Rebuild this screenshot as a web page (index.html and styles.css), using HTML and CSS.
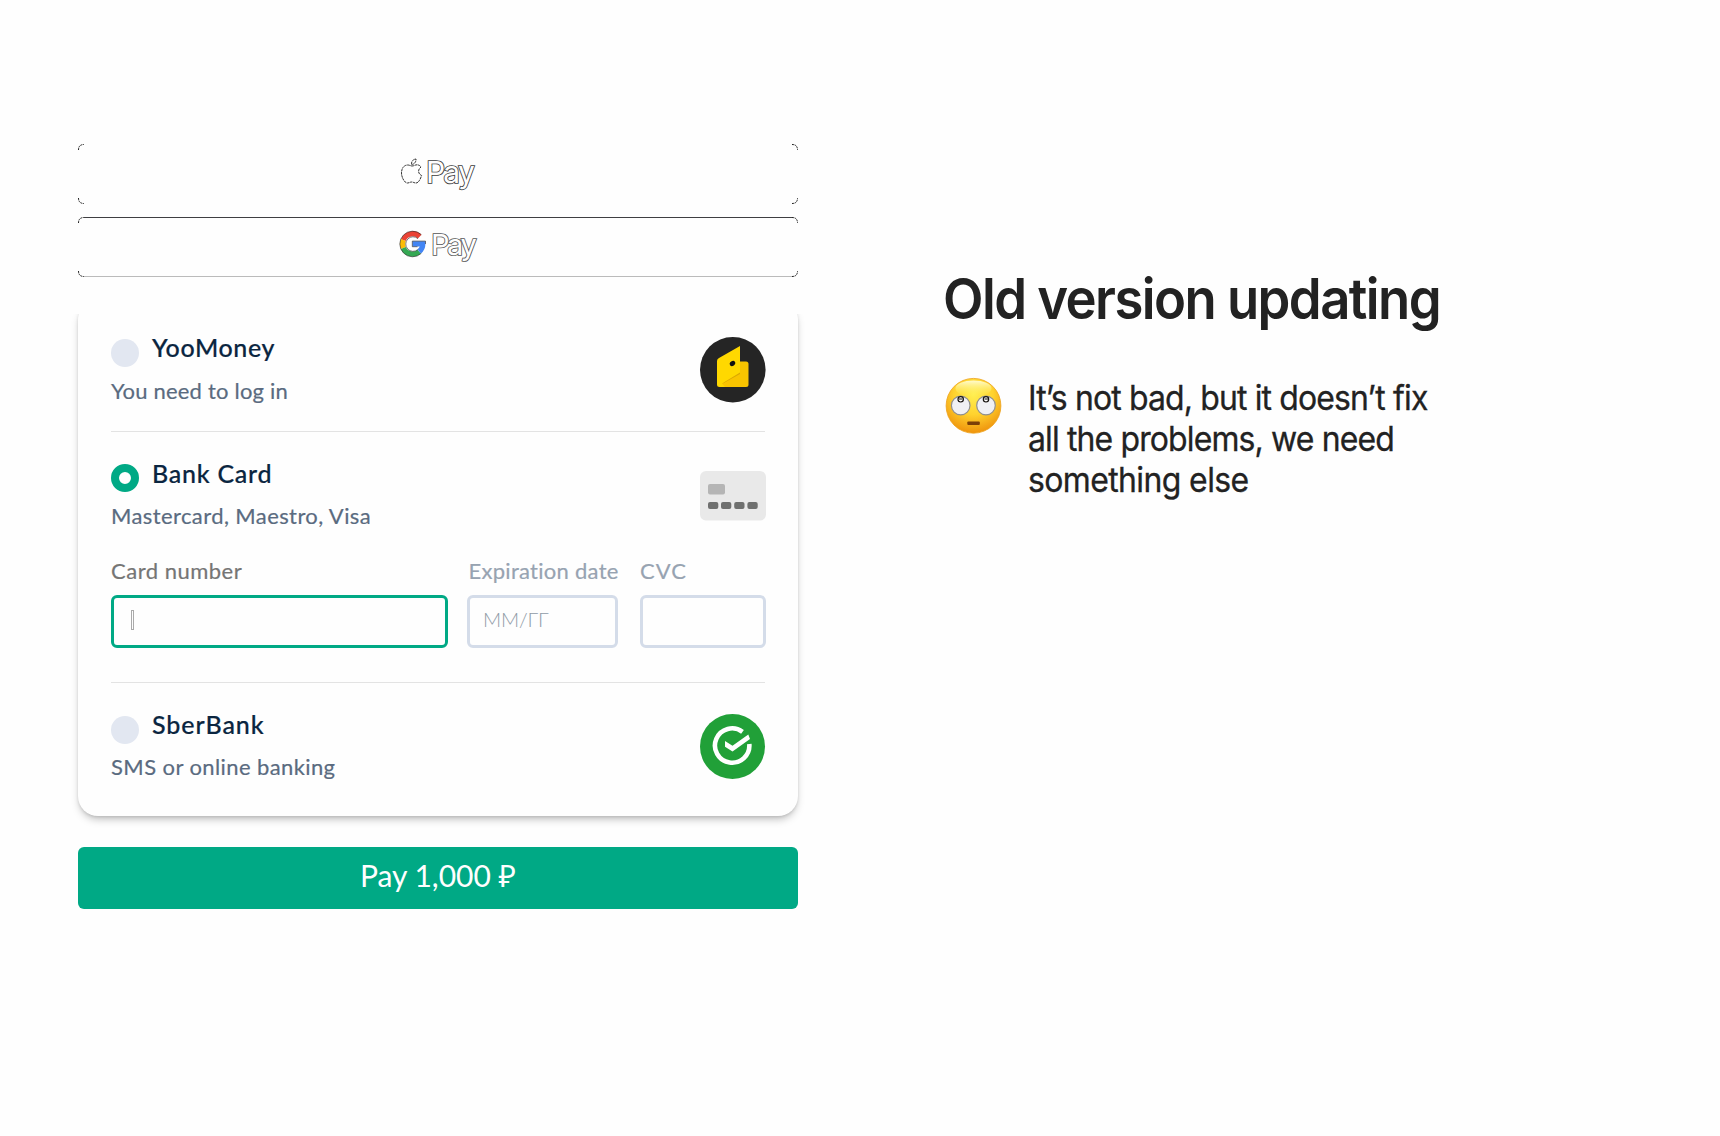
FILE: index.html
```html
<!DOCTYPE html>
<html lang="en">
<head>
<meta charset="utf-8">
<title>Payment</title>
<link rel="stylesheet" href="styles.css">
</head>
<body>
<main class="page">
  <section class="checkout">
    <button class="wallet wallet-apple" aria-label="Apple Pay">
      <svg class="corners" width="720" height="60" viewBox="0 0 720 60" aria-hidden="true"><path d="M.5 6Q.5.5 6 .5M714 .5Q719.500.5 719.500 6M.5 54Q.5 59.500 6 59.500M714 59.500Q719.500 59.500 719.500 54"/></svg>
      <svg class="apple-logo" width="24" height="28" viewBox="0 0 24 28" aria-hidden="true"><path d="M11.500 6.500C11.300 3.500 13 1.200 16 1C16.200 3.800 14.500 6.300 11.500 6.500ZM12 8C14 8 15 6.800 17 6.800C18.800 6.800 20.200 7.800 21 9C17.500 11.500 18 16 21.600 17.500C20.500 21 18.500 25 16 25C14 25 13.500 24 11.800 24C10 24 9.300 25 7.500 25C4.500 25 1.500 19.500 1.500 15C1.500 9.500 4.500 7 7.800 7C9.500 7 10.800 8 12 8Z"/></svg>
      <span class="wallet-text apple-text">Pay</span>
    </button>
    <button class="wallet wallet-google" aria-label="Google Pay">
      <svg class="corners" width="720" height="60" viewBox="0 0 720 60" aria-hidden="true"><path d="M.5 6Q.5.5 6 .5M714 .5Q719.500.5 719.500 6M.5 54Q.5 59.500 6 59.500M714 59.500Q719.500 59.500 719.500 54"/></svg>
      <svg class="google-logo" width="26" height="26" viewBox="0 0 26 26" aria-hidden="true">
        <g stroke-width="5.200" fill="none">
          <path stroke="#ea4335" d="M3.300 9.100A10.100 10.100 0 0 1 19.700 5.600"/>
          <path stroke="#fbbc05" d="M3.300 16.900A10.100 10.100 0 0 1 3.300 9.100"/>
          <path stroke="#34a853" d="M19.200 20.600A10.100 10.100 0 0 1 3.300 16.900"/>
          <path stroke="#4285f4" d="M12.500 12.900H22.800A10.100 10.100 0 0 1 19.200 20.600"/>
        </g>
        <path class="google-edge" d="M21.300 3.600A12.800 12.800 0 1 0 21.300 22.400M18 7.700A7.300 7.300 0 1 0 17.800 18.600M17.500 15.700H12.300V10.100H25.500V13"/>
      </svg>
      <span class="wallet-text google-text">Pay</span>
    </button>

    <div class="card">
      <div class="method">
        <div class="method-info">
          <div class="method-head"><span class="radio"></span><span class="title t-yoo">YooMoney</span></div>
          <div class="sub s-yoo">You need to log in</div>
        </div>
        <svg class="method-icon" width="66" height="66" viewBox="0 0 66 66" aria-hidden="true">
          <circle cx="32.800" cy="32.800" r="32.800" fill="#252525"/>
          <path fill="#f9c400" d="M20 24.500H46Q48.500 24.500 48.500 27V47.500Q48.500 50 46 50H20Z"/>
          <path fill="#dba800" d="M22 47L40 37V26Z"/>
          <path fill="#ffd800" d="M17 24Q17 22 19 21L40 9V35.500L22 46.500L25 50H19.500Q17 50 17 47.500Z"/>
          <ellipse cx="32.500" cy="26.500" rx="2.900" ry="2.300" transform="rotate(-35 32.500 26.500)" fill="#111"/>
        </svg>
      </div>
      <div class="method method-bank">
        <div class="method-row">
          <div class="method-info">
            <div class="method-head"><span class="radio radio-on"></span><span class="title t-bank">Bank Card</span></div>
            <div class="sub s-bank">Mastercard, Maestro, Visa</div>
          </div>
          <svg class="method-icon card-icon" width="66" height="50" viewBox="0 0 66 50" aria-hidden="true">
            <rect width="66" height="49.500" rx="6" fill="#e9e9e9"/>
            <rect x="8" y="13" width="17" height="10.500" rx="2" fill="#b5b5b5"/>
            <g fill="#6f706f"><rect x="8" y="31" width="10.300" height="7" rx="2"/><rect x="21" y="31" width="10.300" height="7" rx="2"/><rect x="34.200" y="31" width="10.300" height="7" rx="2"/><rect x="47.400" y="31" width="10.300" height="7" rx="2"/></g>
          </svg>
        </div>
        <div class="fields">
          <div class="field"><span class="label l-card">Card number</span><div class="input input-focus"><span class="caret"></span></div></div>
          <div class="field field-exp"><span class="label l-exp">Expiration date</span><div class="input"><span class="placeholder">ММ/ГГ</span></div></div>
          <div class="field"><span class="label l-cvc">CVC</span><div class="input"></div></div>
        </div>
      </div>
      <div class="method method-sber">
        <div class="method-info">
          <div class="method-head"><span class="radio"></span><span class="title t-sber">SberBank</span></div>
          <div class="sub s-sber">SMS or online banking</div>
        </div>
        <svg class="method-icon" width="66" height="66" viewBox="0 0 66 66" aria-hidden="true">
          <circle cx="32.500" cy="32.500" r="32.500" fill="#21a038"/>
          <path fill="none" stroke="#fff" stroke-width="4.600" d="M42.500 17.800A17.200 17.200 0 1 0 49.300 30"/>
          <path fill="#fff" d="M25 27L32.500 31.800L48.300 20.600L50 25L32.500 37.500L25 32.800Z"/>
        </svg>
      </div>
    </div>

    <button class="pay">Pay 1,000 ₽</button>
  </section>

  <section class="notes">
    <h1>Old version updating</h1>
    <div class="note">
      <svg class="emoji" width="58" height="58" viewBox="0 0 58 58" aria-hidden="true">
        <defs>
          <radialGradient id="face" cx=".5" cy=".3" r=".72"><stop offset="0" stop-color="#ffee50"/><stop offset=".5" stop-color="#ffd22e"/><stop offset="1" stop-color="#ee8f0a"/></radialGradient>
          <linearGradient id="shine" x2="0" y2="1"><stop offset="0" stop-color="#fffbd0"/><stop offset="1" stop-color="#fff45c" stop-opacity="0"/></linearGradient>
        </defs>
        <circle cx="28.500" cy="28.800" r="27.400" fill="url(#face)" stroke="#eda21a" stroke-width=".8"/>
        <ellipse cx="28.500" cy="11.500" rx="18" ry="8" fill="url(#shine)"/>
        <circle cx="15.700" cy="28.500" r="9.300" fill="#f0f0f4" stroke="#8f8f91" stroke-width="1.200"/>
        <circle cx="41" cy="28.500" r="9.300" fill="#f0f0f4" stroke="#8f8f91" stroke-width="1.200"/>
        <circle cx="15.700" cy="22.300" r="2.700" fill="#fff" stroke="#16120f" stroke-width="1.200"/>
        <circle cx="41" cy="22.300" r="2.700" fill="#fff" stroke="#16120f" stroke-width="1.200"/>
        <path d="M14 22H17.500M39.500 22H43" stroke="#16120f"/>
        <rect x="22.300" y="44.500" width="12.500" height="3.400" rx="1" fill="#7c3f08"/>
      </svg>
      <p>It’s not bad, but it doesn’t fix<br>all the problems, we need<br><span class="b3">something else</span></p>
    </div>
  </section>
</main>
</body>
</html>
```

FILE: styles.css
```css
* { box-sizing: border-box; }
body { margin: 0; background: #fefefe; font-family: Lato, "Noto Sans", sans-serif; }
button { font: inherit; border: 0; padding: 0; background: none; }
.page { display: flex; min-height: 1136px; padding: 144px 78px 0; gap: 146px; }
.checkout { width: 720px; display: flex; flex-direction: column; }

.wallet { position: relative; width: 720px; height: 60px; display: flex; }
.corners { position: absolute; left: 0; top: 0; fill: none; stroke: #222; stroke-width: 1; stroke-dasharray: 2 .6; }
.wallet-google { margin-top: 13px; }
.wallet-google::before, .wallet-google::after { content: ""; position: absolute; left: 6px; right: 6px; height: 1px; }
.wallet-google::before { top: 0; background: #3f3f42; }
.wallet-google::after { bottom: 0; background: #bbb; }
.apple-logo { margin: 14px 0 0 322px; fill: none; stroke: #333; stroke-width: 1; stroke-dasharray: 2.500 .6; }
.google-logo { margin: 14px 0 0 322px; overflow: visible; }
.google-edge { fill: none; stroke: #222; stroke-width: .6; }
.wallet-text { font-family: Inter, sans-serif; font-size: 30px; line-height: 36px; color: #fefefe; -webkit-text-stroke: 1.700px #3c3c3c; paint-order: stroke fill; letter-spacing: -1.800px; }
.apple-text { margin: 10px 0 0 2px; }
.google-text { margin: 10px 0 0 5px; font-size: 29px; letter-spacing: -2.500px; -webkit-text-stroke-color: #555; }

.card { margin-top: 23px; height: 516px; border-radius: 20px; padding: 0 33px; background: #fefefe; box-shadow: 0 5px 9px -2px rgba(0,0,0,.26), 0 1px 3px rgba(0,0,0,.1); clip-path: polygon(-20px 14px, 740px 14px, 740px 540px, -20px 540px); }
.method { display: flex; justify-content: space-between; height: 132px; padding-top: 31px; border-bottom: 1px solid #e3e3e3; }
.method-bank { display: block; height: 251px; padding-top: 25px; }
.method-row { display: flex; justify-content: space-between; }
.method-sber { padding-top: 25px; border: 0; }
.method-head { display: flex; gap: 13px; height: 32px; }
.radio { width: 28px; height: 28px; margin-top: 8px; border-radius: 50%; background: #e2e7f1; }
.radio-on { margin-top: 7px; background: #fefefe; border: 8.500px solid #00a985; }
.title { font-size: 25px; line-height: 32px; color: #0a2540; font-weight: 500; white-space: nowrap; -webkit-text-stroke: .2px #0a2540; }
.t-yoo { letter-spacing: .620px; }
.t-bank { letter-spacing: .750px; }
.t-sber { letter-spacing: .950px; }
.sub { margin-top: 13px; font-size: 22px; line-height: 28px; color: #5a6b80; white-space: nowrap; letter-spacing: .400px; -webkit-text-stroke: .2px #5a6b80; }
.s-yoo { margin-top: 14px; letter-spacing: .200px; }
.method-icon { margin: 6px -1px 0 0; }
.card-icon { margin-top: 14px; }
.fields { display: grid; grid-template-columns: 337px 151px 126px; justify-content: space-between; margin: 27px -1px 0 0; }
.field { display: flex; flex-direction: column; }
.label { font-size: 22px; line-height: 28px; color: #97a3b1; white-space: nowrap; -webkit-text-stroke: .2px currentColor; }
.l-card { color: #757575; letter-spacing: .500px; }
.l-exp { letter-spacing: .280px; }
.l-cvc { letter-spacing: 1px; }
.input { height: 53px; margin-top: 10px; border: 3px solid #d4dce9; border-radius: 6px; padding: 6px 14px; }
.field-exp .input { margin-left: -1.500px; margin-right: 1.500px; }
.input-focus { border-color: #00a985; }
.caret { display: block; width: 3px; height: 20px; margin: 6px 0 0 3px; border: 1px solid #aaa; }
.placeholder { font-size: 20px; line-height: 30px; color: #8f9ba7; font-weight: 300; margin-left: -1px; letter-spacing: -.2px; }

.pay { height: 62px; margin-top: 31px; border-radius: 6px; background: #00a985; color: #fefefe; font-size: 30px; line-height: 53px; padding-bottom: 6px; }

.notes { padding-top: 123px; font-family: Inter, sans-serif; color: #222; }
h1 { margin: 0 0 0 -1.500px; font-size: 56px; line-height: 64px; font-weight: 600; letter-spacing: -1.650px; white-space: nowrap; transform: scaleX(.94); transform-origin: 0 0; }
.note { display: flex; margin: 46px 0 0 1px; gap: 25px; }
.emoji { flex: none; }
.note p { margin: 0; font-size: 34px; line-height: 41.200px; letter-spacing: -.920px; white-space: nowrap; transform: scaleX(.94); transform-origin: 0 0; -webkit-text-stroke: .3px #222; }
.b3 { letter-spacing: -.650px; }
```
